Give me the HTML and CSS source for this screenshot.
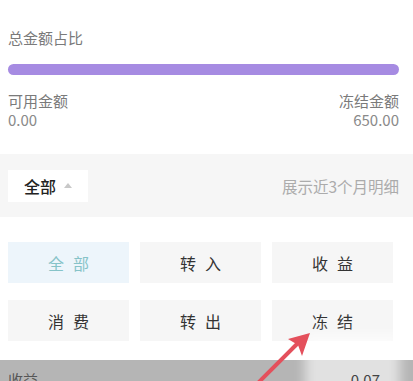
FILE: index.html
```html
<!DOCTYPE html>
<html lang="zh">
<head>
<meta charset="utf-8">
<link rel="stylesheet" href="styles.css">
</head>
<body>
<div class="page">
  <section class="summary">
    <div class="title">总金额占比</div>
    <div class="bar"></div>
    <div class="amounts">
      <div class="col">
        <div class="label">可用金额</div>
        <div class="value">0.00</div>
      </div>
      <div class="col right">
        <div class="label">冻结金额</div>
        <div class="value">650.00</div>
      </div>
    </div>
  </section>
  <section class="filterbar">
    <div class="pill">全部<span class="tri"></span></div>
    <div class="hint">展示近3个月明细</div>
  </section>
  <section class="grid">
    <div class="btn active">全部</div>
    <div class="btn">转入</div>
    <div class="btn">收益</div>
    <div class="btn">消费</div>
    <div class="btn">转出</div>
    <div class="btn">冻结</div>
  </section>
  <section class="listbar">
    <span class="li-label">收益</span>
    <span class="li-value">0.07</span>
  </section>
  <div class="patch"></div>
  <svg class="arrow" width="80" height="60" viewBox="0 0 80 60">
    <line x1="8" y1="60" x2="50" y2="18" stroke="#e4505c" stroke-width="4" stroke-linecap="round"/>
    <polygon points="62,8 40,14 50,20 54,31" fill="#e4505c"/>
  </svg>
</div>
</body>
</html>
```
FILE: styles.css
```css
html, body {
  margin: 0;
  padding: 0;
  background: #fff;
}
.page {
  position: relative;
  width: 413px;
  height: 381px;
  overflow: hidden;
  font-family: "Noto Sans CJK SC", "Noto Sans", sans-serif;
}
.summary {
  padding: 29px 14px 0 8px;
}
.title {
  font-size: 15px;
  line-height: 17px;
  color: #7a7a7a;
}
.bar {
  margin-top: 18px;
  height: 11px;
  border-radius: 6px;
  background: #a68be2;
}
.amounts {
  margin-top: 17px;
  display: flex;
  justify-content: space-between;
}
.col.right {
  text-align: right;
}
.label {
  font-size: 15px;
  line-height: 18px;
  color: #7a7a7a;
}
.value {
  font-size: 15px;
  line-height: 18px;
  color: #8a8a8a;
  margin-top: 1px;
}
.filterbar {
  margin-top: 25px;
  height: 63px;
  background: #f6f6f6;
  display: flex;
  align-items: center;
  justify-content: space-between;
  padding: 0 14px 0 8px;
}
.pill {
  width: 80px;
  height: 32px;
  box-sizing: border-box;
  background: #fff;
  display: flex;
  align-items: center;
  padding-left: 16px;
  font-size: 16px;
  color: #222;
  font-weight: 500;
}
.tri {
  width: 0;
  height: 0;
  border-left: 4px solid transparent;
  border-right: 4px solid transparent;
  border-bottom: 5px solid #c8c8c8;
  margin-left: 8px;
}
.hint {
  font-size: 15.5px;
  color: #ababab;
}
.grid {
  margin-top: 25px;
  padding: 0 20px 0 8px;
  display: grid;
  grid-template-columns: repeat(3, 1fr);
  column-gap: 11px;
  row-gap: 17px;
}
.btn {
  height: 41px;
  background: #f6f6f6;
  display: flex;
  align-items: center;
  justify-content: center;
  font-size: 16px;
  color: #333;
  letter-spacing: 9px;
  text-indent: 9px;
}
.btn.active {
  background: #edf5fb;
  color: #86c3c8;
}
.listbar {
  margin-top: 19px;
  height: 30px;
  background: #b5b5b5;
  display: flex;
  justify-content: space-between;
  align-items: flex-start;
  padding: 11px 33px 0 8px;
  box-sizing: border-box;
  font-size: 15px;
  line-height: 18px;
  color: #555;
}
.li-value {
  position: relative;
  z-index: 2;
  color: #444;
}
.patch {
  position: absolute;
  z-index: 1;
  left: 305px;
  top: 334px;
  width: 95px;
  height: 60px;
  background: rgba(255,255,255,0.6);
  filter: blur(6px);
}
.arrow {
  position: absolute;
  z-index: 3;
  left: 248px;
  top: 325px;
}
```
